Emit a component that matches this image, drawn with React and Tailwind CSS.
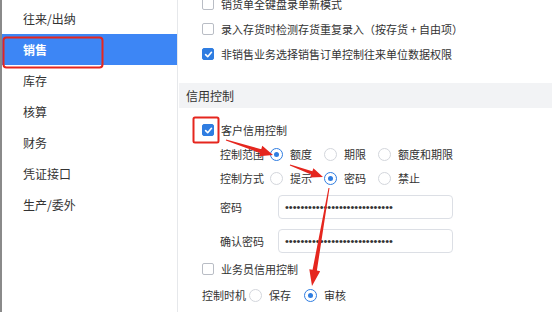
import React from 'react';

const font = { fontFamily: '"Noto Sans CJK SC", "Liberation Sans", sans-serif' };

const menu = ['往来/出纳', '销售', '库存', '核算', '财务', '凭证接口', '生产/委外'];

const Checkbox = ({ checked }) => (
  <span
    className={`w-[12px] h-[12px] rounded-[2px] border flex items-center justify-center shrink-0 ${
      checked ? 'bg-[#2f7de1] border-[#2f7de1]' : 'bg-white border-[#b9bdc5]'
    }`}
  >
    {checked && (
      <svg width="9" height="9" viewBox="0 0 10 10">
        <path d="M1.8 5.2 L4.1 7.4 L8.3 2.6" stroke="white" strokeWidth="1.8" fill="none" strokeLinecap="round" strokeLinejoin="round" />
      </svg>
    )}
  </span>
);

const Radio = ({ checked }) => (
  <span
    className={`w-[13px] h-[13px] rounded-full border bg-white flex items-center justify-center shrink-0 ${
      checked ? 'border-[#2f7de1]' : 'border-[#d3d6dc]'
    }`}
  >
    {checked && <span className="w-[5px] h-[5px] rounded-full bg-[#2f7de1]" />}
  </span>
);

const RadioGroup = ({ options, value, widths }) => (
  <div className="flex items-center">
    {options.map((opt, i) => (
      <div key={opt} className="flex items-center gap-[7px]" style={{ width: widths[i] }}>
        <Radio checked={opt === value} />
        <span>{opt}</span>
      </div>
    ))}
  </div>
);

// tapered annotation arrow, tail -> tip
const arrowPoints = (x0, y0, x1, y1, headLen, headHalf, neckHalf) => {
  const dx = x1 - x0;
  const dy = y1 - y0;
  const len = Math.hypot(dx, dy);
  const ux = dx / len;
  const uy = dy / len;
  const nx = -uy;
  const ny = ux;
  const bx = x1 - ux * headLen;
  const by = y1 - uy * headLen;
  const pts = [
    [x0 + nx * 0.5, y0 + ny * 0.5],
    [bx + nx * neckHalf, by + ny * neckHalf],
    [bx + nx * headHalf, by + ny * headHalf],
    [x1, y1],
    [bx - nx * headHalf, by - ny * headHalf],
    [bx - nx * neckHalf, by - ny * neckHalf],
    [x0 - nx * 0.5, y0 - ny * 0.5],
  ];
  return pts.map((p) => p.join(',')).join(' ');
};

const dots = '••••••••••••••••••••••••••••';

const App = () => {
  return (
    <div className="relative w-[553px] h-[312px] flex bg-white overflow-hidden text-[#333]" style={font}>
      {/* Sidebar */}
      <aside className="w-[178px] shrink-0 border-l-2 border-l-[#8a8a8a] border-r border-r-[#e6e8eb] pt-[3px] text-[12px]">
        {menu.map((item) => (
          <div
            key={item}
            className={`h-[31px] flex items-center pl-[21px] ${
              item === '销售' ? 'bg-[#3d86f5] text-white font-bold' : ''
            }`}
          >
            {item}
          </div>
        ))}
      </aside>

      {/* Content */}
      <main className="flex-1 pl-px pr-px text-[11px]">
        <div className="-mt-[8px]">
          <div className="h-[24px] flex items-center gap-[7px] pl-[23px]">
            <Checkbox />
            <span>销货单全键盘录单新模式</span>
          </div>
          <div className="h-[26px] flex items-center gap-[7px] pl-[23px]">
            <Checkbox />
            <span>录入存货时检测存货重复录入（按存货 + 自由项）</span>
          </div>
          <div className="h-[24px] flex items-center gap-[7px] pl-[23px]">
            <Checkbox checked />
            <span>非销售业务选择销售订单控制往来单位数据权限</span>
          </div>
        </div>

        <div className="mt-[17px] h-[25px] bg-[#f2f3f5] flex items-center pl-[7px] text-[12px]">信用控制</div>

        <div className="mt-[11px] h-[22px] flex items-center gap-[7px] pl-[23px]">
          <Checkbox checked />
          <span>客户信用控制</span>
        </div>

        <div className="mt-[1px] h-[24px] flex items-center pl-[41px]">
          <span className="w-[50px]">控制范围</span>
          <RadioGroup options={['额度', '期限', '额度和期限']} value="额度" widths={[54, 54, 80]} />
        </div>
        <div className="h-[24px] flex items-center pl-[41px]">
          <span className="w-[50px]">控制方式</span>
          <RadioGroup options={['提示', '密码', '禁止']} value="密码" widths={[54, 54, 60]} />
        </div>

        <div className="mt-[5px] h-[24px] flex items-center pl-[41px]">
          <span className="w-[58px]">密码</span>
          <div className="w-[175px] h-[24px] border border-[#dcdfe5] rounded-[4px] flex items-center pl-[6px] text-[11px] tracking-[0px] leading-none" style={{ fontFamily: '"Liberation Sans", sans-serif' }}>
            {dots}
          </div>
        </div>
        <div className="mt-[10px] h-[24px] flex items-center pl-[41px]">
          <span className="w-[58px]">确认密码</span>
          <div className="w-[175px] h-[24px] border border-[#dcdfe5] rounded-[4px] flex items-center pl-[6px] text-[11px] leading-none" style={{ fontFamily: '"Liberation Sans", sans-serif' }}>
            {dots}
          </div>
        </div>

        <div className="mt-[6px] h-[20px] flex items-center gap-[7px] pl-[23px]">
          <Checkbox />
          <span>业务员信用控制</span>
        </div>
        <div className="mt-[6px] h-[20px] flex items-center pl-[23px]">
          <span className="w-[47px]">控制时机</span>
          <RadioGroup options={['保存', '审核']} value="审核" widths={[55, 50]} />
        </div>
      </main>

      {/* Annotations */}
      <svg className="absolute inset-0 pointer-events-none" width="553" height="312">
        <rect x="3.5" y="37.5" width="99" height="30" rx="3" fill="none" stroke="#e5261e" strokeWidth="2" />
        <rect x="193.5" y="117.5" width="25" height="25" rx="1.5" fill="none" stroke="#e5261e" strokeWidth="2" />
        <polygon points={arrowPoints(226, 140, 273, 155, 13, 5.5, 2)} fill="#e5261e" />
        <polygon points={arrowPoints(290, 165, 323, 177, 12, 5, 1.8)} fill="#e5261e" />
        <polygon points={arrowPoints(329, 188, 312, 286, 16, 5.5, 2.2)} fill="#e5261e" />
      </svg>
    </div>
  );
};

export default App;
